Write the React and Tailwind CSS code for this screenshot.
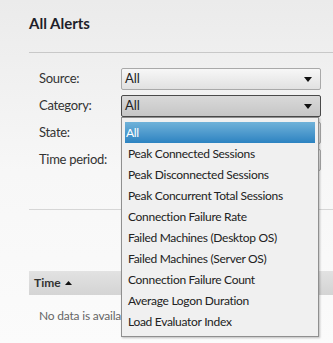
export default function App() {
  const items = [
    "All",
    "Peak Connected Sessions",
    "Peak Disconnected Sessions",
    "Peak Concurrent Total Sessions",
    "Connection Failure Rate",
    "Failed Machines (Desktop OS)",
    "Failed Machines (Server OS)",
    "Connection Failure Count",
    "Average Logon Duration",
    "Load Evaluator Index",
  ];
  const rows = [
    { label: "Source:", value: "All", open: false },
    { label: "Category:", value: "All", open: true },
    { label: "State:", value: "", open: false },
    { label: "Time period:", value: "", open: false },
  ];
  const Arrow = () => (
    <svg width="8" height="5" viewBox="0 0 8 5" className="shrink-0">
      <path d="M0 0 L8 0 L4 5 Z" fill="#111" />
    </svg>
  );
  return (
    <div
      className="relative w-[333px] h-[343px] overflow-hidden bg-gradient-to-b from-[#ebebeb] via-[#f7f7f7] to-[#fbfbfb] text-[#222]"
      style={{ fontFamily: '"Segoe UI", Lato, "Noto Sans", sans-serif' }}
    >
      <div className="pl-[29px] pt-[14px] h-[52px]">
        <div className="text-[15px] font-bold text-[#1f1f2a] leading-[18px]">All Alerts</div>
      </div>
      <div className="ml-[29px] h-[1px] bg-[#c8c8c8]" />
      <div className="pl-[39px] pt-[15px] flex flex-col gap-[5px]">
        {rows.map((r) => (
          <div key={r.label} className="flex items-center h-[22px]">
            <div className="w-[82px] text-[13px] tracking-[-0.3px] text-[#333]">{r.label}</div>
            <div
              className={
                "w-[200px] h-[22px] rounded-[2px] border flex items-center justify-between pl-[3px] pr-[8px] text-[13px] " +
                (r.open
                  ? "border-[#4a4a4a] bg-gradient-to-b from-[#d9d9d9] to-[#c6c6c6]"
                  : "border-[#a9a9a9] bg-gradient-to-b from-[#f7f7f7] to-[#e1e1e1]")
              }
            >
              <span>{r.value}</span>
              <Arrow />
            </div>
          </div>
        ))}
      </div>
      <div className="mt-[38px] ml-[29px] h-[1px] bg-[#d6d6d6]" />
      <div className="mt-[61px] ml-[29px] h-[24px] bg-gradient-to-b from-[#e2e2e2] to-[#d4d4d4] flex items-center pl-[5px] gap-[4px]">
        <span className="text-[12px] font-bold text-[#333]">Time</span>
        <svg width="7" height="4" viewBox="0 0 7 4">
          <path d="M0 4 L7 4 L3.5 0 Z" fill="#111" />
        </svg>
      </div>
      <div className="pl-[39px] pt-[12px] text-[12px] tracking-[-0.2px] text-[#666]">No data is available</div>

      <div className="absolute left-[121px] top-[117px] w-[198px] h-[220px] border border-[#8f8f8f] bg-[#f0f0f0] shadow-[1px_1px_2px_rgba(0,0,0,0.25)] pt-[4px] px-[3px]">
        {items.map((it, i) => (
          <div
            key={it}
            className={
              "h-[21px] flex items-center text-[12px] tracking-[-0.3px] " +
              (i === 0
                ? "bg-gradient-to-b from-[#6fb2d9] to-[#2b83c1] text-white pl-[1px]"
                : "text-[#222] pl-[3px]")
            }
          >
            {it}
          </div>
        ))}
      </div>
    </div>
  );
}
